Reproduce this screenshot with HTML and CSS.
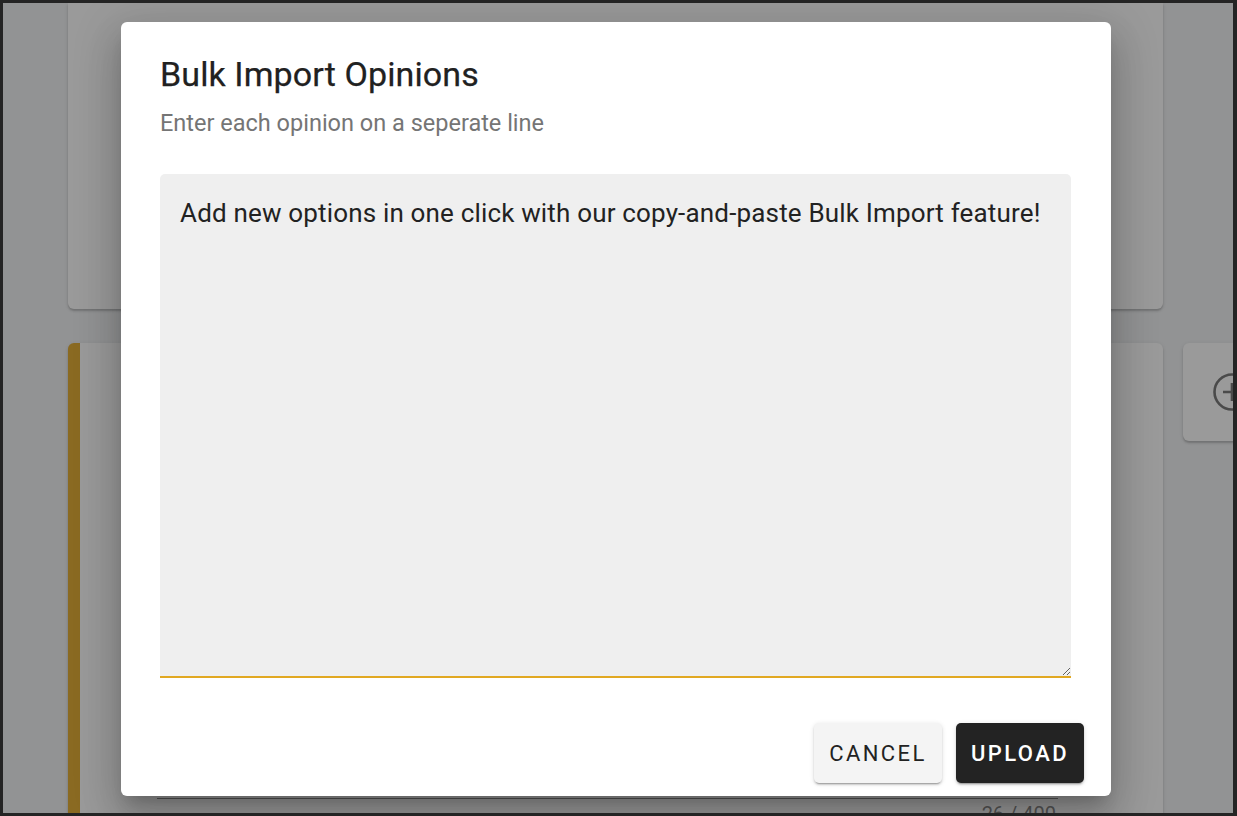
FILE: index.html
```html
<!DOCTYPE html>
<html lang="en">
<head>
<meta charset="utf-8">
<title>Bulk Import Opinions</title>
<link rel="stylesheet" href="styles.css">
</head>
<body>
<div class="frame">
  <div class="page">
    <div class="card card-top"></div>
    <div class="row">
      <div class="card card-main">
        <div class="field-line"></div>
        <div class="counter">26 / 400</div>
      </div>
      <div class="card card-add">
        <svg class="add-icon" width="40" height="40" viewBox="0 0 40 40" fill="none" stroke="#4a4a4a" stroke-width="2.6">
          <circle cx="20" cy="20" r="17.5"/>
          <path d="M20 11v18M11 20h18"/>
        </svg>
      </div>
    </div>
  </div>

  <div class="dialog" role="dialog">
    <h1 class="title">Bulk Import Opinions</h1>
    <p class="subtitle">Enter each opinion on a seperate line</p>
    <textarea class="input">Add new options in one click with our copy-and-paste Bulk Import feature!</textarea>
    <div class="actions">
      <button class="btn btn-cancel">CANCEL</button>
      <button class="btn btn-upload">UPLOAD</button>
    </div>
  </div>
</div>
</body>
</html>
```
FILE: styles.css
```css
* { box-sizing: border-box; }
html, body { margin: 0; padding: 0; }
body {
  font-family: Roboto, "Noto Sans", "Liberation Sans", sans-serif;
  background: #929394;
}
.frame {
  position: relative;
  width: 1237px;
  height: 816px;
  border: 3px solid #242424;
  border-right-width: 4px;
  background: #929394;
  overflow: hidden;
}
.page {
  display: flex;
  flex-direction: column;
  gap: 34px;
  padding-left: 65px;
}
.card {
  background: #9a9a9a;
  box-shadow: 0 2px 2px rgba(0,0,0,0.18), 0 1px 4px rgba(0,0,0,0.08);
}
.card-top {
  width: 1095px;
  height: 306px;
  border-radius: 0 0 6px 6px;
}
.row {
  display: flex;
  gap: 20px;
  align-items: flex-start;
}
.card-main {
  width: 1095px;
  height: 520px;
  border-radius: 6px 6px 0 0;
  border-left: 12px solid #8a6a22;
  padding: 455px 105px 0 77px;
  flex-shrink: 0;
}
.field-line {
  height: 1px;
  background: #555;
}
.counter {
  text-align: right;
  font-size: 20px;
  line-height: 24px;
  color: #555;
  margin-top: 3px;
  margin-right: 2px;
}
.card-add {
  width: 80px;
  height: 98px;
  border-radius: 6px 0 0 6px;
  flex-shrink: 0;
  display: flex;
  align-items: center;
  padding-left: 29px;
}
.dialog {
  position: absolute;
  left: 118px;
  top: 19px;
  width: 990px;
  height: 774px;
  background: #fff;
  border-radius: 6px;
  padding: 32px 40px 0 39px;
  display: flex;
  flex-direction: column;
  box-shadow: 0 11px 15px -7px rgba(0,0,0,0.2), 0 24px 38px 3px rgba(0,0,0,0.14), 0 9px 46px 8px rgba(0,0,0,0.12);
}
.title {
  margin: 0;
  font-size: 34px;
  line-height: 40px;
  font-weight: 400;
  color: #212121;
  letter-spacing: 0.1px;
  -webkit-text-stroke: 0.25px #212121;
}
.subtitle {
  margin: 15px 0 0;
  font-size: 23.5px;
  line-height: 28px;
  color: #757575;
}
.input {
  margin: 37px 0 0;
  width: 911px;
  height: 504px;
  background: #efefef;
  border: none;
  border-bottom: 2px solid #e1a822;
  border-radius: 5px 5px 0 0;
  padding: 23px 20px 0 20px;
  font-family: Roboto, "Noto Sans", "Liberation Sans", sans-serif;
  font-size: 26px;
  line-height: 32px;
  letter-spacing: 0.17px;
  color: #222;
  resize: vertical;
  outline: none;
}
.actions {
  display: flex;
  justify-content: flex-end;
  gap: 14px;
  margin: 45px -13px 0 0;
}
.btn {
  height: 60px;
  width: 128px;
  border: none;
  border-radius: 5px;
  font-family: Roboto, "Noto Sans", "Liberation Sans", sans-serif;
  font-size: 22px;
  letter-spacing: 2.4px;
  padding: 0;
  box-shadow: 0 3px 1px -2px rgba(0,0,0,0.2), 0 2px 2px 0 rgba(0,0,0,0.14), 0 1px 5px 0 rgba(0,0,0,0.12);
}
.btn-cancel {
  background: #f4f4f4;
  color: #222;
  font-weight: 400;
}
.btn-upload {
  background: #232323;
  color: #fff;
  font-weight: 500;
}
```
